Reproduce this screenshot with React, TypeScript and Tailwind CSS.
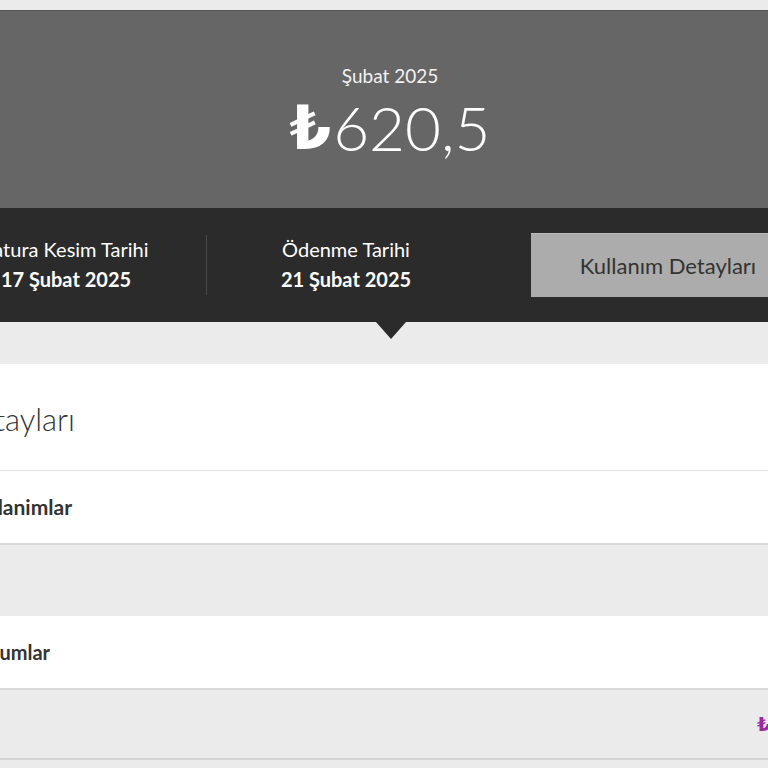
import React from "react";

export default function App() {
  return (
    <div className="w-[768px] h-[768px] overflow-hidden bg-[#ebebeb]" style={{ fontFamily: "Lato, 'Open Sans', sans-serif" }}>
      <div className="w-[928px] ml-[-74px]">
        <div className="h-[10px] bg-[#ebebeb]" />
        <div className="h-[198px] bg-[#666666] border-t border-[#555555] flex flex-col items-center">
          <div className="mt-[53px] text-[19px] leading-[24px] text-[#f2f2f2] font-normal">Şubat 2025</div>
          <div className="mt-[7px] flex items-end text-white leading-[64px]">
            <span className="text-[60px] font-bold mr-[2px] leading-[62px]" style={{ fontFamily: "'DejaVu Sans', sans-serif" }}>₺</span>
            <span className="text-[62px] font-light">620,5</span>
          </div>
        </div>
        <div className="relative h-[114px] bg-[#2b2b2b] flex items-center">
          <div className="w-[280px] flex flex-col items-center text-white mt-[-3px]">
            <div className="text-[20px] leading-[26px] font-normal">Fatura Kesim Tarihi</div>
            <div className="text-[20px] leading-[26px] font-bold mt-[4px]">17 Şubat 2025</div>
          </div>
          <div className="w-px h-[60px] bg-[#4a4a4a]" />
          <div className="w-[278px] flex flex-col items-center text-white mt-[-3px]">
            <div className="text-[20px] leading-[26px] font-normal">Ödenme Tarihi</div>
            <div className="text-[20px] leading-[26px] font-bold mt-[4px]">21 Şubat 2025</div>
          </div>
          <div className="pl-[46px]">
            <div className="w-[274px] h-[64px] bg-[#acacac] border-t border-[#b8b8b8] flex items-center justify-center text-[22px] text-[#333333]">Kullanım Detayları</div>
          </div>
          <div className="absolute left-[450px] top-[114px] w-0 h-0 border-l-[15px] border-r-[15px] border-t-[17px] border-l-transparent border-r-transparent border-t-[#2b2b2b]" />
        </div>
        <div className="h-[42px]" />
        <div className="bg-white border-b-2 border-[#d9d9d9]">
          <div className="h-[107px] flex items-center border-b border-[#e3e3e3]">
            <div className="w-[149px] flex justify-end whitespace-nowrap text-[31px] font-light text-[#333333] leading-none pt-[4px]">
              <span className="shrink-0">Fatura Detayları</span>
            </div>
          </div>
          <div className="h-[72px] flex items-center">
            <div className="w-[146px] flex justify-end whitespace-nowrap text-[21px] font-bold text-[#333333]">
              <span className="shrink-0">Dönem İçi Kullanimlar</span>
            </div>
          </div>
        </div>
        <div className="h-[71px]" />
        <div className="bg-white border-b-2 border-[#d9d9d9] h-[74px] flex items-center">
          <div className="w-[124px] flex justify-end whitespace-nowrap text-[20px] font-bold text-[#333333]">
            <span className="shrink-0">Diğer Durumlar</span>
          </div>
        </div>
        <div className="h-[70px] border-b-2 border-[#d4d4d4] flex items-center">
          <span className="ml-[831px] text-[20px] font-bold text-[#9c2aa0]" style={{ fontFamily: "'DejaVu Sans', sans-serif" }}>₺</span>
        </div>
      </div>
    </div>
  );
}
